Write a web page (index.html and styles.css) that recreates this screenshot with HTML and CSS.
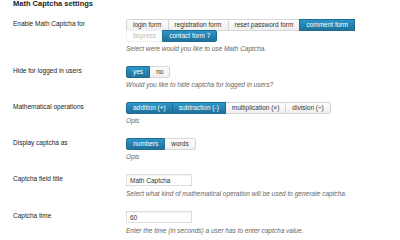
FILE: index.html
```html
<!DOCTYPE html>
<html lang="en">
<head>
	<meta charset="UTF-8">
	<title>Math Captcha settings</title>
	<link rel="stylesheet" href="styles.css">
</head>
<body>
	<div class="wrap">
		<h3 class="title">Math Captcha settings</h3>

		<div class="row">
			<div class="label">Enable Math Captcha for</div>
			<div class="field">
				<div class="group wide">
					<span class="btn">login form</span>
					<span class="btn">registration form</span>
					<span class="btn">reset password form</span>
					<span class="btn on">comment form</span>
					<span class="btn off">bbpress</span>
					<span class="btn on">contact form 7</span>
				</div>
				<p class="desc">Select were would you like to use Math Captcha.</p>
			</div>
		</div>

		<div class="row">
			<div class="label">Hide for logged in users</div>
			<div class="field">
				<div class="group">
					<span class="btn on">yes</span>
					<span class="btn">no</span>
				</div>
				<p class="desc">Would you like to hide captcha for logged in users?</p>
			</div>
		</div>

		<div class="row">
			<div class="label">Mathematical operations</div>
			<div class="field">
				<div class="group">
					<span class="btn on">addition (+)</span>
					<span class="btn on">subtraction (-)</span>
					<span class="btn">multiplication (&times;)</span>
					<span class="btn">division (&divide;)</span>
				</div>
				<p class="desc">Opis</p>
			</div>
		</div>

		<div class="row">
			<div class="label">Display captcha as</div>
			<div class="field">
				<div class="group">
					<span class="btn on">numbers</span>
					<span class="btn">words</span>
				</div>
				<p class="desc">Opis</p>
			</div>
		</div>

		<div class="row">
			<div class="label">Captcha field title</div>
			<div class="field">
				<input class="text" type="text" value="Math Captcha">
				<p class="desc">Select what kind of mathematical operation will be used to generate captcha.</p>
			</div>
		</div>

		<div class="row">
			<div class="label">Captcha time</div>
			<div class="field">
				<input class="text" type="text" value="60">
				<p class="desc">Enter the time (in seconds) a user has to enter captcha value.</p>
			</div>
		</div>
	</div>
</body>
</html>
```
FILE: styles.css
```css
body{
	margin: 0;
	background: #fff;
	font-family: "Liberation Sans", Arial, sans-serif;
	font-size: 6.5px;
	color: #222;
}
.wrap{
	padding-left: 13px;
	overflow: hidden;
	height: 240px;
}
.title{
	margin: -1px 0 5px;
	font-size: 7.5px;
	line-height: 9px;
	font-weight: bold;
	color: #222;
}
.row{
	display: flex;
	padding: 6px 0 7px;
}
.label{
	width: 113px;
	flex: none;
	line-height: 10px;
}
.field{
	flex: 1;
}
.group{
	display: flex;
	flex-wrap: wrap;
}
.group.wide{
	max-width: 240px;
}
.btn{
	display: block;
	height: 10px;
	line-height: 10px;
	padding: 0 6px;
	margin: 0 -1px -1px 0;
	border: 1px solid #d6d6d6;
	background: linear-gradient(#fdfdfd, #efefef);
	color: #333;
	white-space: nowrap;
}
.btn:first-child{
	border-radius: 2px 0 0 2px;
}
.btn:last-child{
	border-radius: 0 2px 2px 0;
}
.btn.on{
	position: relative;
	border-color: #1f6d92;
	background: linear-gradient(#2b97c8, #20729a);
	color: #fff;
}
.btn.off{
	border-color: #f0f0f0;
	background: #fff;
	color: #bbb;
}
.desc{
	margin: 4px 0 0;
	line-height: 8px;
	font-style: italic;
	color: #666;
}
.text{
	display: block;
	box-sizing: border-box;
	width: 66px;
	height: 12px;
	margin: 0;
	padding: 0 3px;
	border: 1px solid #ddd;
	box-shadow: inset 0 1px 1px rgba(0,0,0,0.05);
	font-family: inherit;
	font-size: 6.5px;
	color: #333;
	outline: none;
}
```
